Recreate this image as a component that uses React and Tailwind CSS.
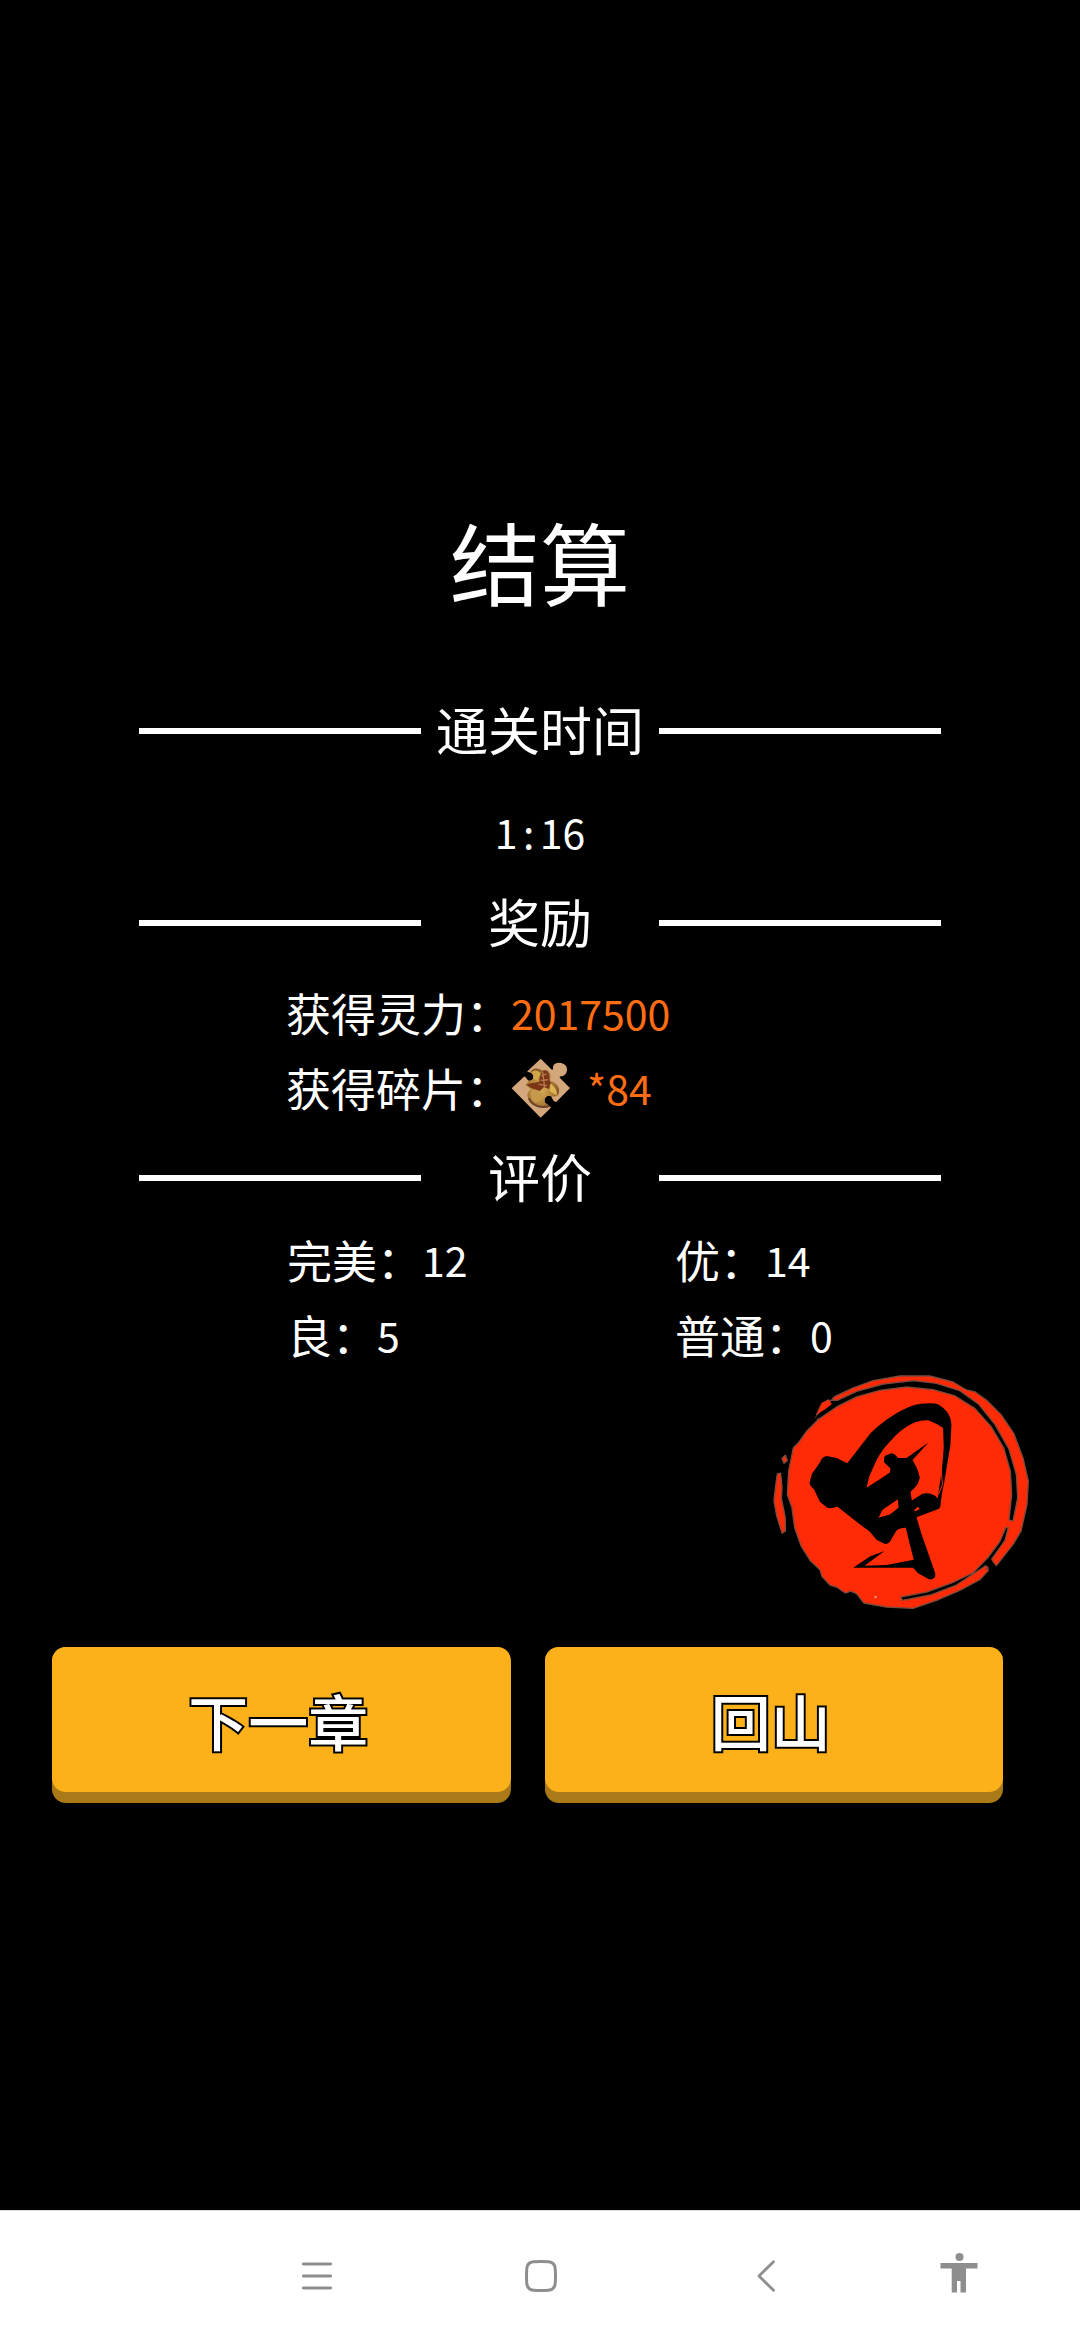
const OUTLINED =
  'text-[60px] font-medium leading-[145px] text-white [-webkit-text-stroke:4px_#000] [paint-order:stroke_fill] [stroke-linejoin:round]';

function SectionHeading({ children }) {
  return (
    <div className="mx-[139px] grid h-[76px] grid-cols-[282fr_237fr_282fr] items-center">
      <span className="h-[6px] bg-white" />
      <h2 className="pb-[4px] text-center text-[52px] leading-[72px]">{children}</h2>
      <span className="h-[6px] bg-white" />
    </div>
  );
}

function Num({ children, className = '' }) {
  return <span className={`text-[41px] ${className}`}>{children}</span>;
}

function PuzzlePiece() {
  return (
    <svg viewBox="88 48 182 186" className="h-[62px] w-[60px]" aria-label="碎片" role="img">
      <defs>
        <radialGradient id="gold" cx="0.45" cy="0.55" r="0.6">
          <stop offset="0" stopColor="#d8b058" />
          <stop offset="0.6" stopColor="#b08038" />
          <stop offset="1" stopColor="#74451f" />
        </radialGradient>
        <clipPath id="piece">
          <path d="M178 52 L212 86 C218 84 215 78 216 74 C221 62 246 60 256 76 C263 94 250 106 240 105 C235 105 234 108 238 112 L267 141 L226 183 C218 184 216 178 210 166 C198 160 186 170 191 186 C198 192 206 195 209 201 L178 231 L90 142 L128 106 C136 108 136 118 144 119 C156 119 160 106 152 97 C146 93 140 94 137 91 Z" />
        </clipPath>
      </defs>
      <g clipPath="url(#piece)">
        <rect x="88" y="48" width="182" height="186" fill="#d4a67c" />
        <path d="M148 92 C156 76 174 82 182 88 C204 80 212 104 206 118 C226 126 240 140 232 160 C222 172 212 164 204 168 L208 196 C182 208 150 196 140 170 C134 158 142 150 148 144 L132 132 L146 116 Z" fill="url(#gold)" />
        <path d="M150 94 C160 82 174 90 178 98 L168 118 L150 112 Z" fill="#cfa748" />
        <path d="M136 132 C152 122 166 126 174 122 C174 100 184 84 196 90 C208 104 200 116 210 126 L204 144 L188 138 L176 150 L150 142 Z" fill="#7a3418" />
        <path d="M180 104 L196 98 M178 118 L200 116 M172 130 L198 134 M184 92 L190 140" stroke="#b97a4c" strokeWidth="4" fill="none" />
        <path d="M206 128 C220 136 230 150 226 164 L206 150 Z" fill="#dcb650" />
        <path d="M150 150 C160 146 178 150 186 160 C180 182 166 188 156 182 C148 172 146 160 150 150 Z" fill="#c59a4a" />
        <path d="M142 172 C152 198 184 204 208 194" stroke="#6d4528" strokeWidth="6" fill="none" />
      </g>
    </svg>
  );
}

function GradeSeal() {
  return (
    <svg viewBox="90 72 790 730" className="mr-[47px] h-[243px] w-[263px] self-end" role="img" aria-label="甲">
      <g fill="#ff2a06" stroke="#7d4a3c" strokeWidth="4" strokeLinejoin="round">
        <path d="M160 300 L176 284 L200 250 L236 214 L284 178 L278 152 L284 146 L340 120 L400 98 L480 84 L570 84 L640 102 L680 126 L706 132 L740 156 L784 200 L822 256 L850 330 L866 400 L862 470 L844 550 L820 590 L768 656 L740 662 L746 668 L720 696 L660 728 L590 758 L520 782 L440 778 L372 766 L350 738 L332 730 L316 736 L290 718 L270 712 L246 686 L240 666 L212 640 L184 596 L164 540 L156 480 L142 440 L146 370 Z" />
        <path d="M230 200 L246 166 L266 156 L276 170 L256 188 Z" />
        <path d="M126 332 L136 322 L142 338 L132 346 Z" />
        <path d="M112 378 L122 376 L126 420 L124 450 L136 510 L136 550 L126 556 L110 504 L102 460 L106 420 Z" />
      </g>
      <g fill="#000" stroke="#7d4a3c" strokeWidth="4" strokeLinejoin="round">
        <path d="M274 156 L292 157 L350 130 L430 108 L520 98 L590 106 L660 128 L716 168 L766 230 L808 304 L830 380 L834 450 L820 520 L808 516 L816 440 L812 370 L792 300 L754 236 L706 182 L646 144 L580 125 L500 117 L420 127 L350 147 L290 177 L236 214 L226 210 Z" />
        <path d="M806 538 L796 578 L756 634 L768 656 L748 662 L738 654 L650 712 L572 742 L488 758 L482 748 L560 733 L640 704 L700 675 L744 630 L780 582 L798 540 Z" />
      </g>
      <path d="M220 218 L240 192 L280 160 L286 170 L250 196 L232 212 Z M746 652 L756 640 L776 664 L750 674 Z" fill="#000" />
      <path d="M230 200 L246 166 L266 156 L276 168 L256 184 Z" fill="#ff2a06" />
      <g fill="#000">
        <path d="M322 346 L350 310 L392 256 Q440 208 500 180 Q530 167 560 167 Q580 164 596 170 Q612 180 622 192 Q634 210 635 230 L632 290 L622 350 L614 400 L606 440 L602 474 Q600 484 590 486 L530 508 L544 556 L586 676 Q588 686 584 690 Q576 698 566 694 L534 676 L520 660 L440 660 L340 660 L390 626 L434 610 L374 654 L440 652 L522 636 L510 590 L498 540 Q480 540 470 548 L450 582 Q444 590 434 588 L410 576 L390 552 L350 522 L292 476 Q274 484 262 480 L240 462 L222 424 Q208 412 209 404 L216 378 L240 344 Q246 326 260 324 L290 330 Z" />
      </g>
      <g fill="#ff2a06">
        <path d="M380 420 L388 386 L410 336 Q428 304 446 286 Q464 264 484 248 Q504 232 524 224 Q546 216 566 217 L594 230 L610 240 L612 300 L606 370 L598 420 L594 452 Q586 442 578 440 Q562 434 548 438 L516 458 L512 432 Q526 420 534 408 L540 390 L532 362 L518 336 L566 284 L500 330 L474 330 Q464 316 454 316 L434 324 L432 342 L452 362 L450 374 L414 398 Z" />
        <path d="M416 510 L428 486 L474 454 L476 480 L450 500 Z" />
        <path d="M522 488 L534 476 L540 484 L526 490 Z" />
      </g>
      <path d="M604 360 L608 410 L596 440" stroke="#ff2a06" strokeWidth="3" fill="none" />
      <circle cx="407" cy="748" r="4" fill="#e98a70" />
    </svg>
  );
}

function ChapterButton({ children }) {
  return (
    <button type="button" className="rounded-[14px] bg-[#a97a17] pb-[11px]">
      <span className={`block rounded-[14px] bg-[#fcb019] pr-[6px] ${OUTLINED}`}>{children}</span>
    </button>
  );
}

function NavBar() {
  return (
    <nav className="grid h-[130px] grid-cols-[224fr_224fr_226fr_160fr] border-t border-[#dddddd] bg-white pr-[41px] pl-[205px] text-[#8e8e8e]">
      <button type="button" aria-label="菜单" className="flex items-center justify-center">
        <svg viewBox="0 0 32 32" className="size-[32px]" stroke="currentColor" strokeWidth="2.8" strokeLinecap="round">
          <path d="M2.3 4H29.7M2.3 16H29.7M2.3 28H29.7" />
        </svg>
      </button>
      <button type="button" aria-label="主页" className="flex items-center justify-center">
        <svg viewBox="0 0 32 32" className="size-[32px]" fill="none" stroke="currentColor" strokeWidth="3">
          <path d="M8.500 1.800Q16 1.200 23.500 1.800Q29.700 2.300 30.200 8.500Q30.800 16 30.200 23.500Q29.700 29.700 23.500 30.200Q16 30.800 8.500 30.200Q2.300 29.700 1.800 23.500Q1.200 16 1.800 8.500Q2.300 2.300 8.500 1.800Z" />
        </svg>
      </button>
      <button type="button" aria-label="返回" className="flex items-center justify-center">
        <svg viewBox="0 0 20 32" className="h-[32px] w-[20px]" fill="none" stroke="currentColor" strokeWidth="2.8" strokeLinecap="round" strokeLinejoin="round">
          <path d="M17.500 1.700L3 16L17.500 30.300" />
        </svg>
      </button>
      <button type="button" aria-label="无障碍" className="flex items-center justify-center">
        <svg viewBox="0 0 38 46" className="h-[46px] w-[38px]" fill="currentColor">
          <circle cx="19.500" cy="4" r="4" />
          <path d="M0.500 10H37.500V15.500H26V39.500H20.500V28H17V39.500H11.700V15.500H0.500Z" />
        </svg>
      </button>
    </nav>
  );
}

export default function App() {
  return (
    <div className="flex min-h-screen flex-col bg-black font-['Noto_Sans_CJK_SC',sans-serif] text-white">
      <main className="flex grow flex-col pt-[500px]">
        <h1 className="text-center text-[90px] leading-[120px]">结算</h1>

        <section className="mt-[73px]">
          <SectionHeading>通关时间</SectionHeading>
          <p className="mt-[25px] flex justify-center leading-[75px]">
            <Num>1</Num>
            <Num className="w-[22px] text-center">:</Num>
            <Num>16</Num>
          </p>
        </section>

        <section className="mt-[16px]">
          <SectionHeading>奖励</SectionHeading>
          <div className="mt-[14px] ml-[286px] text-[45px] leading-[75px]">
            <p className="flex">
              获得灵力：<Num className="text-[#ff6d12]">2017500</Num>
            </p>
            <p className="flex items-center">
              获得碎片：
              <PuzzlePiece />
              <Num className="ml-[16px] text-[#ff6d12]">*84</Num>
            </p>
          </div>
        </section>

        <section className="mt-[15px]">
          <SectionHeading>评价</SectionHeading>
          <div className="mt-[6px] grid grid-cols-[388fr_405fr] pl-[287px] text-[45px] leading-[75px]">
            <p className="flex">完美：<Num>12</Num></p>
            <p className="flex">优：<Num>14</Num></p>
            <p className="flex">良：<Num>5</Num></p>
            <p className="flex">普通：<Num>0</Num></p>
          </div>
        </section>

        <GradeSeal />

        <div className="mt-[32px] grid grid-cols-2 gap-[34px] pr-[77px] pl-[52px]">
          <ChapterButton>下一章</ChapterButton>
          <ChapterButton>回山</ChapterButton>
        </div>
      </main>
      <NavBar />
    </div>
  );
}
